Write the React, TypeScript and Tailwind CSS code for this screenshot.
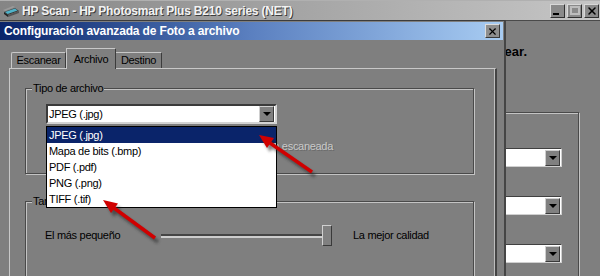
import { X } from 'lucide-react';

function ScannerIcon() {
	return (
		<svg width="17" height="14" viewBox="0 0 17 14">
			<polygon points="1,8 12,4 16,7 5,11" fill="#3a3a3a" />
			<polygon points="2,8 12,4.6 14.5,6.6 4.6,10" fill="#4fb3c9" />
			<polygon points="1,8 5,11 5,13 1,10" fill="#222" />
			<polygon points="5,11 16,7 16,9 5,13" fill="#555" />
			<polygon points="0,6 10,2 12,3 2,7" fill="#9a9a9a" />
		</svg>
	);
}

function TitleButton({ children }: { children: React.ReactNode }) {
	return (
		<div className="flex h-[14px] w-[15px] items-center justify-center border border-t-[#d8d8d8] border-l-[#d8d8d8] border-r-[#303030] border-b-[#303030] bg-[#8a8a8a]">
			{children}
		</div>
	);
}

function ArrowButton() {
	return (
		<div className="flex h-[16px] w-[15px] items-center justify-center border border-t-[#cfcfcf] border-l-[#cfcfcf] border-r-[#3a3a3a] border-b-[#3a3a3a] bg-[#808080]">
			<div className="h-0 w-0 border-x-[4px] border-t-[4px] border-x-transparent border-t-black" />
		</div>
	);
}

function SideCombo() {
	return (
		<div className="flex h-[19px] w-[110px] items-center justify-end border border-t-[#404040] border-l-[#404040] border-r-[#d0d0d0] border-b-[#d0d0d0] bg-white pr-[1px]">
			<ArrowButton />
		</div>
	);
}

const options = ['JPEG (.jpg)', 'Mapa de bits (.bmp)', 'PDF (.pdf)', 'PNG (.png)', 'TIFF (.tif)'];

export default function App() {
	return (
		<div className="relative h-[276px] w-[600px] overflow-hidden bg-[#7f7f7f] font-['Liberation_Sans',Arial,sans-serif] text-[11px] tracking-[-0.3px] text-black">
			{/* ventana de fondo */}
			<div className="flex h-[21px] items-center border-t border-t-[#b0b0b0] border-b border-b-[#4a4a4a] bg-gradient-to-r from-[#858585] to-[#c6c6c6] pl-[3px]">
				<ScannerIcon />
				<span className="ml-[2px] text-[12px] font-bold tracking-[-0.2px] text-[#f2f2f2] [text-shadow:1px_1px_0_#3c3c3c]">
					HP Scan - HP Photosmart Plus B210 series (NET)
				</span>
				<div className="ml-auto mr-[1px] flex gap-[2px]">
					<TitleButton>
						<div className="mt-[6px] mr-[3px] h-[2px] w-[6px] bg-black" />
					</TitleButton>
					<TitleButton>
						<div className="h-[9px] w-[10px] border-2 border-[#bdbdbd]" />
					</TitleButton>
					<TitleButton>
						<X size={12} strokeWidth={3} color="#000" />
					</TitleButton>
				</div>
			</div>
			<div className="flex flex-col">
				<div className="mt-[23px] w-[527px] text-right text-[13px] font-bold leading-[16px] tracking-normal">
					Escanear.
				</div>
				<div className="ml-[430px] mt-[52px] flex h-[200px] w-[149px] flex-col items-end border border-[#4a4a4a] pr-[16px] pt-[35px] shadow-[inset_1px_1px_0_#c4c4c4,1px_1px_0_#c4c4c4]">
					<SideCombo />
					<div className="mt-[29px]">
						<SideCombo />
					</div>
					<div className="mt-[29px]">
						<SideCombo />
					</div>
				</div>
			</div>

			{/* cuadro de diálogo */}
			<div className="absolute left-0 top-[20px] flex h-[260px] w-[506px] flex-col border-t border-t-[#3c3c3c] border-r-2 border-r-[#454545] bg-[#7f7f7f] pt-[1px]">
				<div className="mr-[1px] flex h-[19px] items-center bg-gradient-to-r from-[#0a246a] via-[#5b80c0] to-[#a8ccf2] pl-[4px] pr-[3px]">
					<span className="text-[12px] font-bold tracking-[-0.15px] text-white">
						Configuración avanzada de Foto a archivo
					</span>
					<div className="ml-auto flex h-[14px] w-[15px] items-center justify-center border border-t-[#dcdcdc] border-l-[#dcdcdc] border-r-[#3a3a3a] border-b-[#3a3a3a] bg-[#8e8e8e]">
						<X size={11} strokeWidth={2.5} color="#000" />
					</div>
				</div>

				<div className="ml-[9px] mt-[8px] flex h-[20px] items-end pl-[2px]">
					<div className="flex h-[16px] w-[55px] items-center justify-center rounded-tl-[2px] border-t border-l border-r border-t-[#c8c8c8] border-l-[#c8c8c8] border-r-[#3c3c3c]">
						Escanear
					</div>
					<div className="relative z-10 -mb-px flex h-[21px] w-[50px] items-start justify-center border-t border-l border-r border-t-[#c8c8c8] border-l-[#c8c8c8] border-r-[#3c3c3c] bg-[#7f7f7f] pt-[2px]">
						Archivo
					</div>
					<div className="flex h-[16px] w-[46px] items-center justify-center border-t border-r border-t-[#c8c8c8] border-r-[#3c3c3c]">
						Destino
					</div>
				</div>

				<div className="ml-[9px] flex w-[488px] flex-1 flex-col border-t border-l border-r-2 border-t-[#c8c8c8] border-l-[#c8c8c8] border-r-[#444] shadow-[inset_-1px_0_0_#bdbdbd]">
					<div className="relative ml-[15px] mt-[19px] h-[86px] w-[449px] border border-[#4a4a4a] shadow-[inset_1px_1px_0_#c4c4c4,1px_1px_0_#c4c4c4]">
						<span className="absolute -top-[7px] left-[6px] bg-[#7f7f7f] px-[1px] leading-[13px]">
							Tipo de archivo
						</span>
						<div className="ml-[20px] mt-[15px] flex h-[20px] w-[231px] items-center border-2 border-t-[#3a3a3a] border-l-[#3a3a3a] border-r-[#d4d4d4] border-b-[#d4d4d4] bg-white pl-[1px] pr-[1px]">
							<span className="flex-1">JPEG (.jpg)</span>
							<ArrowButton />
						</div>
						<div className="mt-[16px] flex w-[307px] justify-end leading-[13px] text-[#c9c9c9] [text-shadow:1px_1px_0_#6a6a6a]">
							Mostrar vista previa de la imagen escaneada
						</div>
					</div>

					<div className="relative ml-[15px] mt-[27px] h-[90px] w-[449px] border border-[#4a4a4a] shadow-[inset_1px_1px_0_#c4c4c4,1px_1px_0_#c4c4c4]">
						<span className="absolute -top-[7px] left-[6px] bg-[#7f7f7f] px-[1px] leading-[13px]">
							Tamaño de archivo
						</span>
						<div className="ml-[19px] mt-[23px] flex h-[21px] items-center">
							<span className="w-[116px]">El más pequeño</span>
							<div className="h-[4px] w-[161px] border-t-2 border-b-2 border-t-[#454545] border-b-[#cdcdcd]" />
							<div className="h-[21px] w-[10px] border border-t-[#d0d0d0] border-l-[#d0d0d0] border-r-[#3a3a3a] border-b-[#3a3a3a] bg-[#808080]" />
							<span className="ml-[21px]">La mejor calidad</span>
						</div>
					</div>
				</div>
			</div>

			{/* lista desplegada */}
			<div className="absolute left-[46px] top-[126px] w-[231px] border border-black bg-white">
				{options.map((o, i) => (
					<div
						key={o}
						className={`flex h-[16px] items-center pl-[2px] ${i === 0 ? 'bg-[#0a246a] text-white' : ''}`}
					>
						{o}
					</div>
				))}
			</div>

			{/* flechas rojas */}
			<svg className="absolute left-0 top-0" width="600" height="276" viewBox="0 0 600 276">
				<defs>
					<filter id="sh" x="-20%" y="-20%" width="140%" height="140%">
						<feGaussianBlur stdDeviation="1.6" />
					</filter>
				</defs>
				<g filter="url(#sh)" opacity="0.55" transform="translate(3,4)">
					<line x1="312" y1="172" x2="270" y2="143" stroke="#222" strokeWidth="3.5" />
					<polygon points="259,135 274,138 267,148" fill="#222" />
					<line x1="155" y1="238" x2="114" y2="208" stroke="#222" strokeWidth="3.5" />
					<polygon points="103,200 118,203.5 111,213" fill="#222" />
				</g>
				<line x1="312" y1="172" x2="270" y2="143" stroke="#d00000" strokeWidth="3.5" />
				<polygon points="259,135 274,138 267,148" fill="#d00000" />
				<line x1="155" y1="238" x2="114" y2="208" stroke="#d00000" strokeWidth="3.5" />
				<polygon points="103,200 118,203.5 111,213" fill="#d00000" />
			</svg>
		</div>
	);
}
